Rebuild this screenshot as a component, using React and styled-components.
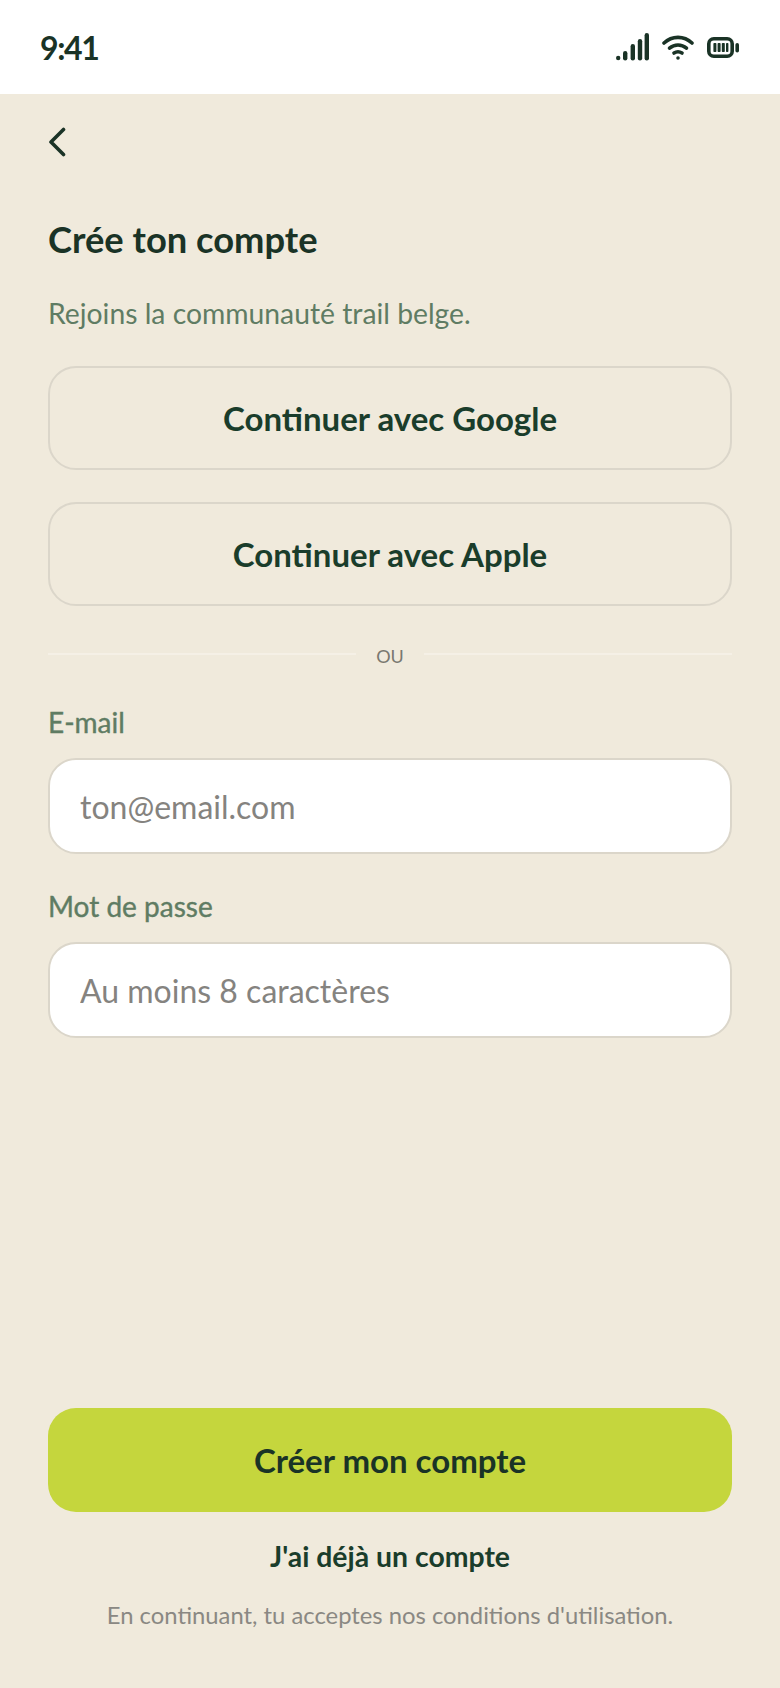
import styled, { createGlobalStyle } from "styled-components";

const GlobalStyle = createGlobalStyle`
    html, body {
        margin: 0;
        padding: 0;
        background: #f0eadc;
    }
    * {
        box-sizing: border-box;
    }
`;

const fontStack = `Lato, "Noto Sans", sans-serif`;

function SignalIcon() {
    return (
        <svg width="33" height="28" viewBox="0 0 33 28" fill="#1a3326">
            <circle cx="2.2" cy="25" r="2.2" />
            <rect x="7" y="18" width="4.4" height="9.5" rx="2.2" />
            <rect x="14.6" y="11" width="4.4" height="16.5" rx="2.2" />
            <rect x="21.8" y="6" width="4.4" height="21.5" rx="2.2" />
            <rect x="28.6" y="0" width="4.4" height="27.5" rx="2.2" />
        </svg>
    );
}

function WifiIcon() {
    return (
        <svg width="32" height="25" viewBox="0 0 32 25" fill="none" stroke="#1a3326" strokeWidth="3.6" strokeLinecap="round">
            <path d="M2 8C10 0.5 22 0.5 30 8" />
            <path d="M7.5 13.2C12.5 9 19.5 9 24.5 13.2" />
            <path d="M12 18C14.5 16.4 17.5 16.4 20 18" />
            <circle cx="16" cy="23" r="1" fill="#1a3326" strokeWidth="1.6" />
        </svg>
    );
}

function BatteryIcon() {
    return (
        <svg width="32" height="21" viewBox="0 0 32 21" fill="none">
            <rect x="1.8" y="1.8" width="23.4" height="17.4" rx="5" stroke="#1a3326" strokeWidth="3.6" />
            <rect x="6.4" y="6" width="3" height="9" rx="0.8" fill="#1a3326" />
            <rect x="10.6" y="6" width="3" height="9" rx="0.8" fill="#1a3326" />
            <rect x="14.8" y="6" width="3" height="9" rx="0.8" fill="#1a3326" />
            <rect x="19" y="6" width="2.4" height="9" rx="0.8" fill="#1a3326" />
            <rect x="28.4" y="6" width="3.6" height="9.5" rx="1.8" fill="#1a3326" />
        </svg>
    );
}

function App() {
    return (
        <Screen>
            <GlobalStyle />
            <StatusBar>
                <Clock>9:41</Clock>
                <StatusIcons>
                    <SignalIcon />
                    <WifiIcon />
                    <BatteryIcon />
                </StatusIcons>
            </StatusBar>
            <Content>
                <BackButton aria-label="Retour">
                    <svg width="18" height="30" viewBox="0 0 18 30" fill="none" stroke="#1a3326" strokeWidth="3.6" strokeLinecap="round" strokeLinejoin="round">
                        <path d="M14.5 2.5L2 15L14.5 27.5" />
                    </svg>
                </BackButton>
                <Title>Crée ton compte</Title>
                <Subtitle>Rejoins la communauté trail belge.</Subtitle>
                <SocialList>
                    <SocialButton>Continuer avec Google</SocialButton>
                    <SocialButton>Continuer avec Apple</SocialButton>
                </SocialList>
                <Divider>
                    <span>OU</span>
                </Divider>
                <Field>
                    <Label>E-mail</Label>
                    <Input placeholder="ton@email.com" />
                </Field>
                <Field>
                    <Label>Mot de passe</Label>
                    <Input placeholder="Au moins 8 caractères" />
                </Field>
                <Footer>
                    <PrimaryButton>Créer mon compte</PrimaryButton>
                    <LinkButton>J'ai déjà un compte</LinkButton>
                    <Legal>En continuant, tu acceptes nos conditions d'utilisation.</Legal>
                </Footer>
            </Content>
        </Screen>
    );
}

export default App;

const Screen = styled.div`
    width: 780px;
    height: 1688px;
    display: flex;
    flex-direction: column;
    overflow: hidden;
    font-family: ${fontStack};
    background: #f0eadc;
`;

const StatusBar = styled.div`
    height: 94px;
    flex-shrink: 0;
    background: #fff;
    display: flex;
    align-items: center;
    justify-content: space-between;
    padding: 0 41px 0 40px;
`;

const Clock = styled.div`
    font-size: 32px;
    font-weight: 700;
    letter-spacing: -1.4px;
    color: #1a3326;
`;

const StatusIcons = styled.div`
    display: flex;
    align-items: center;
    gap: 13px;
`;

const Content = styled.div`
    flex: 1;
    display: flex;
    flex-direction: column;
    padding: 33px 48px 0;
`;

const BackButton = styled.button`
    width: 20px;
    height: 30px;
    padding: 0;
    border: none;
    background: none;
    display: block;
`;

const Title = styled.h1`
    margin: 60px 0 0;
    font-size: 36.3px;
    line-height: 44px;
    font-weight: 700;
    color: #1a3326;
`;

const Subtitle = styled.p`
    margin: 34px 0 0;
    font-size: 28.3px;
    line-height: 36px;
    color: #5f7c63;
`;

const SocialList = styled.div`
    margin-top: 35px;
    display: flex;
    flex-direction: column;
    gap: 32px;
`;

const SocialButton = styled.button`
    height: 104px;
    border: 2px solid #dbd6ca;
    border-radius: 28px;
    background: transparent;
    font-family: inherit;
    font-size: 33px;
    font-weight: 700;
    color: #1a3d2b;
`;

const Divider = styled.div`
    margin-top: 36px;
    display: flex;
    align-items: center;
    gap: 20px;
    height: 28px;
    color: #7a7870;
    font-size: 18px;

    &::before,
    &::after {
        content: "";
        flex: 1;
        height: 2px;
        background: #f5f0e6;
        margin-top: -4px;
    }
`;

const Field = styled.div`
    display: flex;
    flex-direction: column;
    margin-top: 35px;

    &:first-of-type {
        margin-top: 44px;
    }
`;

const Label = styled.label`
    font-size: 28px;
    line-height: 34px;
    color: #5f7c63;
    -webkit-text-stroke: 0.4px #5f7c63;
    margin-bottom: 19px;
`;

const Input = styled.input`
    width: 100%;
    height: 96px;
    padding: 0 30px;
    border: 2px solid #dbd6ca;
    border-radius: 28px;
    background: #fff;
    font-family: inherit;
    font-size: 32px;
    outline: none;

    &::placeholder {
        color: #85837f;
        opacity: 1;
    }
`;

const Footer = styled.div`
    margin-top: auto;
    padding-bottom: 58px;
    display: flex;
    flex-direction: column;
    align-items: center;
`;

const PrimaryButton = styled.button`
    width: 100%;
    height: 104px;
    border: none;
    border-radius: 28px;
    background: #c5d63d;
    font-family: inherit;
    font-size: 33px;
    font-weight: 700;
    color: #1a3326;
`;

const LinkButton = styled.button`
    margin-top: 27px;
    padding: 0;
    border: none;
    background: none;
    font-family: inherit;
    font-size: 28.4px;
    line-height: 34px;
    font-weight: 700;
    color: #1a3d2b;
`;

const Legal = styled.p`
    margin: 27px 0 0;
    font-size: 23.8px;
    line-height: 30px;
    color: #8a8883;
`;
